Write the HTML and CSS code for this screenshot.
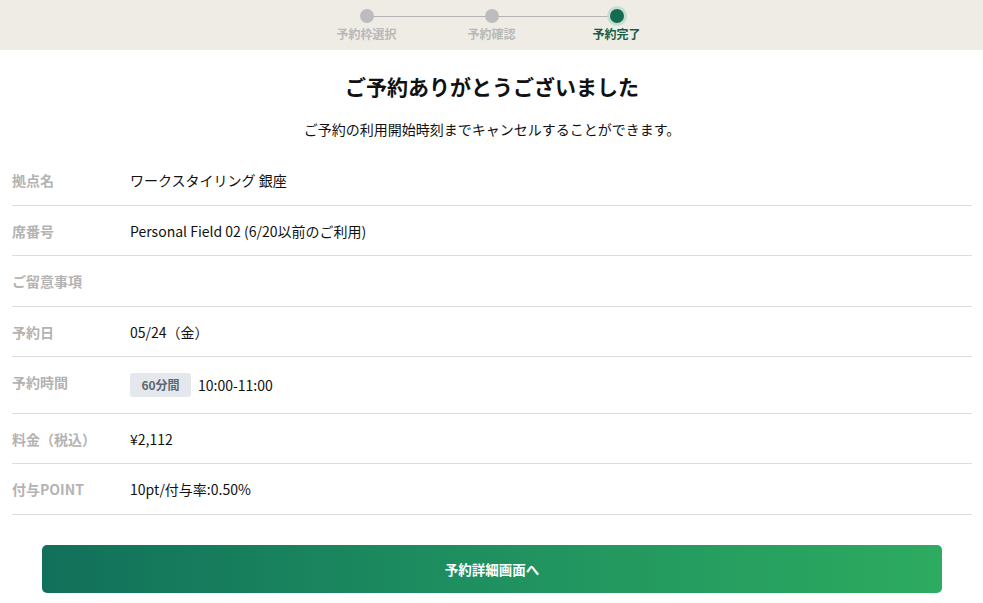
FILE: index.html
```html
<!DOCTYPE html>
<html lang="ja">
<head>
<meta charset="utf-8">
<link rel="stylesheet" href="styles.css">
</head>
<body>
<header class="stepper">
  <div class="step done"><span class="dot"></span><span class="step-label">予約枠選択</span></div>
  <div class="step done"><span class="dot"></span><span class="step-label">予約確認</span></div>
  <div class="step active"><span class="dot"></span><span class="step-label">予約完了</span></div>
</header>
<main class="content">
  <h1 class="title">ご予約ありがとうございました</h1>
  <p class="lead">ご予約の利用開始時刻までキャンセルすることができます。</p>
  <dl class="details">
    <div class="row"><dt>拠点名</dt><dd>ワークスタイリング 銀座</dd></div>
    <div class="row"><dt>席番号</dt><dd>Personal Field 02 (6/20以前のご利用)</dd></div>
    <div class="row"><dt>ご留意事項</dt><dd></dd></div>
    <div class="row"><dt>予約日</dt><dd>05/24（金）</dd></div>
    <div class="row"><dt>予約時間</dt><dd class="time"><span class="badge">60分間</span>10:00-11:00</dd></div>
    <div class="row"><dt>料金（税込）</dt><dd>¥2,112</dd></div>
    <div class="row"><dt>付与POINT</dt><dd>10pt/付与率:0.50%</dd></div>
  </dl>
  <div class="actions">
    <button class="primary">予約詳細画面へ</button>
  </div>
</main>
</body>
</html>
```
FILE: styles.css
```css
* { box-sizing: border-box; }
html, body { margin: 0; padding: 0; background: #fff; }
body {
  font-family: "Noto Sans CJK JP", "Noto Sans", sans-serif;
  color: #111;
}
.stepper {
  height: 50px;
  background: #efece6;
  display: flex;
  justify-content: center;
}
.step {
  position: relative;
  width: 125px;
  display: flex;
  flex-direction: column;
  align-items: center;
}
.step + .step::before {
  content: "";
  position: absolute;
  top: 16px;
  right: 50%;
  width: 125px;
  height: 1px;
  background: #b3b3b3;
}
.dot {
  position: relative;
  z-index: 1;
  width: 14px;
  height: 14px;
  margin-top: 9px;
  border-radius: 50%;
  background: #bcbcbc;
}
.step.active .dot {
  background: #136b51;
  box-shadow: 0 0 0 3px #c6ddd0;
}
.step-label {
  margin-top: 2px;
  font-size: 12px;
  line-height: 18px;
  font-weight: 700;
  color: #b8b8b8;
}
.step.active .step-label { color: #165e49; }

.content {
  padding: 0 11px 0 12px;
}
.title {
  margin: 21px 0 0;
  font-size: 21px;
  line-height: 30px;
  font-weight: 700;
  text-align: center;
  color: #111;
}
.lead {
  margin: 18px 0 0;
  font-size: 14px;
  line-height: 20px;
  text-align: center;
  color: #111;
}
.details {
  margin: 16px 0 0;
}
.row {
  display: flex;
  align-items: flex-start;
  padding: 16px 0 15.5px;
  border-bottom: 1px solid #dcdcdc;
  min-height: 50.5px;
}
.row dt {
  width: 118px;
  flex: none;
  font-size: 14px;
  line-height: 18px;
  font-weight: 700;
  color: #b3b3b3;
}
.row dd {
  margin: 0;
  font-size: 14px;
  line-height: 18px;
  color: #111;
}
.row dd.time {
  display: flex;
  align-items: center;
  gap: 7px;
  line-height: 24px;
}
.badge {
  display: inline-block;
  width: 61px;
  height: 24px;
  line-height: 24px;
  text-align: center;
  border-radius: 3px;
  background: #e4e8ed;
  color: #5b6671;
  font-size: 12px;
  font-weight: 700;
}
.actions {
  padding: 30px 30px 0;
}
.primary {
  display: block;
  width: 100%;
  height: 48px;
  border: 0;
  border-radius: 5px;
  background: linear-gradient(90deg, #11705a 0%, #1f9160 50%, #2dab5f 100%);
  color: #fff;
  font-family: "Noto Sans CJK JP", sans-serif;
  font-size: 13.5px;
  font-weight: 700;
  cursor: pointer;
}
```
